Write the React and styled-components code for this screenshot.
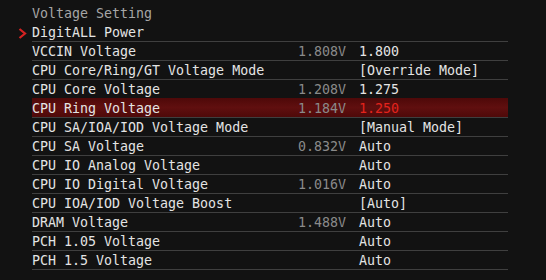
import React from "react";
import styled, { createGlobalStyle } from "styled-components";

const GlobalStyle = createGlobalStyle`
  html, body {
    margin: 0;
    padding: 0;
    background: #121212;
  }
`;

const rows = [
  { name: "DigitALL Power", sub: true },
  { name: "VCCIN Voltage", measured: "1.808V", value: "1.800" },
  { name: "CPU Core/Ring/GT Voltage Mode", value: "[Override Mode]" },
  { name: "CPU Core Voltage", measured: "1.208V", value: "1.275" },
  { name: "CPU Ring Voltage", measured: "1.184V", value: "1.250", active: true },
  { name: "CPU SA/IOA/IOD Voltage Mode", value: "[Manual Mode]" },
  { name: "CPU SA Voltage", measured: "0.832V", value: "Auto" },
  { name: "CPU IO Analog Voltage", value: "Auto" },
  { name: "CPU IO Digital Voltage", measured: "1.016V", value: "Auto" },
  { name: "CPU IOA/IOD Voltage Boost", value: "[Auto]" },
  { name: "DRAM Voltage", measured: "1.488V", value: "Auto" },
  { name: "PCH 1.05 Voltage", value: "Auto" },
  { name: "PCH 1.5 Voltage", value: "Auto" },
];

const Screen = styled.div`
  width: 546px;
  height: 280px;
  box-sizing: border-box;
  padding: 3px 38px 0 32px;
  background: #121212;
  font-family: "DejaVu Sans Mono", "Liberation Mono", monospace;
  font-size: 13.3px;
  overflow: hidden;
`;

const Row = styled.div`
  position: relative;
  display: grid;
  grid-template-columns: 1fr 68px 149px;
  height: 17px;
  line-height: 18px;
  padding-top: 2px;
  box-sizing: content-box;
  margin-top: -1px;
  border-bottom: 1px solid ${(p) => (p.$plain ? "transparent" : "#3f3f3f")};
  background: ${(p) =>
    p.$active
      ? "linear-gradient(180deg, #4e0909 0%, #600f0f 50%, #4e0909 100%)"
      : "transparent"};
  color: ${(p) => (p.$plain ? "#a6a6a6" : "#e4e4e4")};
  &:first-child {
    margin-top: 0;
  }
`;

const Name = styled.span`
  white-space: nowrap;
`;

const Measured = styled.span`
  text-align: right;
  padding-right: 13px;
  color: #8a8a8a;
  white-space: nowrap;
`;

const Value = styled.span`
  color: ${(p) => (p.$active ? "#e3231c" : "#e4e4e4")};
  white-space: nowrap;
`;

const Marker = styled.svg`
  position: absolute;
  left: -14px;
  top: 6px;
`;

const Chevron = () => (
  <Marker width="9" height="11" viewBox="0 0 9 11">
    <polyline
      points="1.5,1 7,5.5 1.5,10"
      fill="none"
      stroke="#d42222"
      strokeWidth="2.2"
    />
  </Marker>
);

export default function App() {
  return (
    <>
      <GlobalStyle />
      <Screen>
        <Row $plain>
          <Name>Voltage Setting</Name>
        </Row>
        {rows.map((r) => (
          <Row key={r.name} $active={r.active}>
            {r.sub && <Chevron />}
            <Name>{r.name}</Name>
            <Measured>{r.measured}</Measured>
            <Value $active={r.active}>{r.value}</Value>
          </Row>
        ))}
      </Screen>
    </>
  );
}
